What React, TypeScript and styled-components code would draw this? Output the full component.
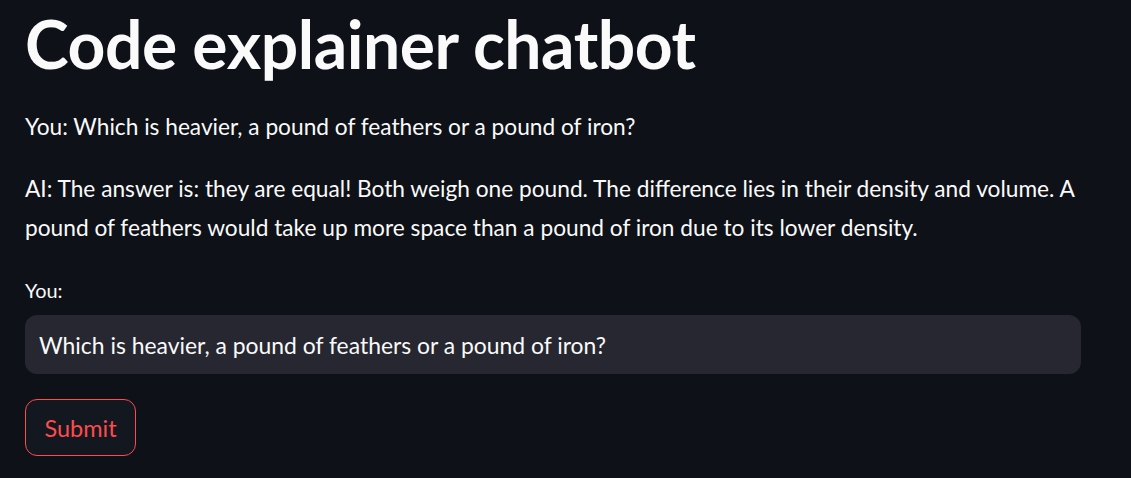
import React from "react";
import styled, { createGlobalStyle } from "styled-components";

const GlobalStyle = createGlobalStyle`
  html, body {
    margin: 0;
    padding: 0;
    background: #0e1117;
  }
  body {
    font-family: Lato, "Liberation Sans", sans-serif;
    color: rgb(250, 250, 250);
  }
  * { box-sizing: border-box; }
`;

const Page = styled.main`
  min-height: 478px;
  background: #0e1117;
  padding: 0 25px;
`;

const Column = styled.div`
  width: 1056px;
  display: flex;
  flex-direction: column;
`;

const Title = styled.h1`
  margin: 4px 0 0;
  font-size: 66px;
  line-height: 79px;
  font-weight: 700;
  letter-spacing: -0.45px;
  color: rgb(250, 250, 250);
`;

const Paragraph = styled.p`
  margin: 0 0 24px;
  font-size: 22.7px;
  line-height: 38.4px;
  color: rgb(250, 250, 250);
`;

const Messages = styled.section`
  margin-top: 25px;
  display: flex;
  flex-direction: column;
`;

const Field = styled.div`
  margin-top: 7px;
  display: flex;
  flex-direction: column;
`;

const Label = styled.label`
  font-size: 19.9px;
  line-height: 25px;
  margin-bottom: 12px;
  color: rgb(250, 250, 250);
`;

const TextInput = styled.input`
  width: 1056px;
  height: 59px;
  border: none;
  outline: none;
  border-radius: 12px;
  background: #262730;
  color: rgb(250, 250, 250);
  font-family: Lato, "Liberation Sans", sans-serif;
  font-size: 22.9px;
  padding: 0 14px;
`;

const SubmitButton = styled.button`
  margin-top: 25px;
  align-self: flex-start;
  width: 111px;
  height: 57px;
  border: 1px solid #ff4b4b;
  border-radius: 12px;
  background: rgb(19, 23, 32);
  color: #ff4b4b;
  font-family: Lato, "Liberation Sans", sans-serif;
  font-size: 23.5px;
  cursor: pointer;
`;

export default function App() {
  return (
    <>
      <GlobalStyle />
      <Page>
        <Column>
          <Title>Code explainer chatbot</Title>
          <Messages>
            <Paragraph>You: Which is heavier, a pound of feathers or a pound of iron?</Paragraph>
            <Paragraph>
              AI: The answer is: they are equal! Both weigh one pound. The difference lies in their density and volume. A
              pound of feathers would take up more space than a pound of iron due to its lower density.
            </Paragraph>
          </Messages>
          <Field>
            <Label htmlFor="you">You:</Label>
            <TextInput id="you" defaultValue="Which is heavier, a pound of feathers or a pound of iron?" />
          </Field>
          <SubmitButton type="button">Submit</SubmitButton>
        </Column>
      </Page>
    </>
  );
}
